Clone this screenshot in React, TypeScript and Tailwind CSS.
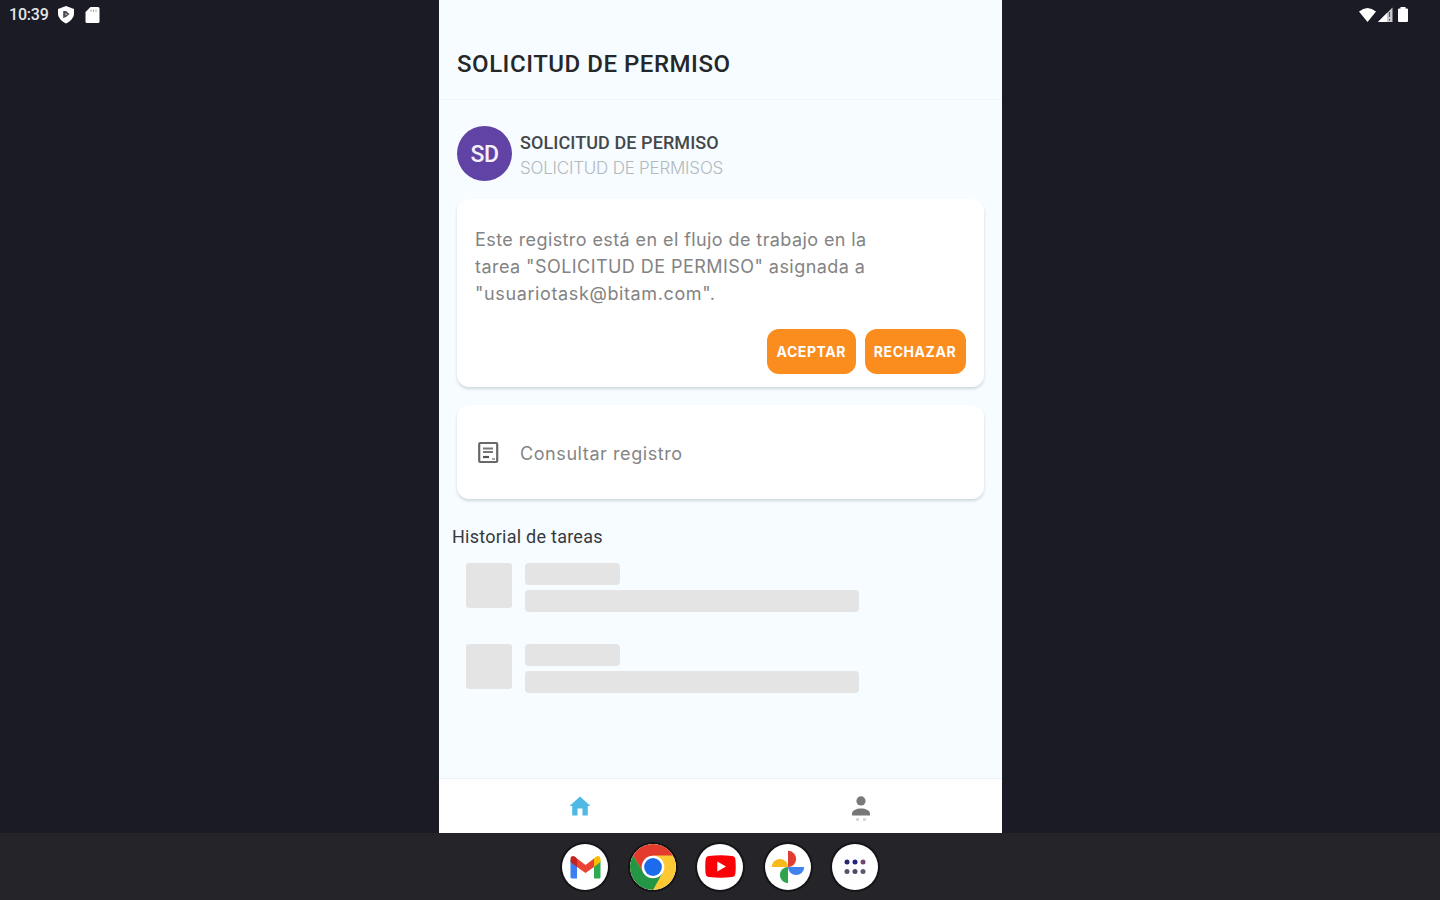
import React from "react";

function ShieldIcon() {
  return (
    <svg className="ml-[7px] h-[20px] w-[18px]" viewBox="0 0 18 20">
      <path d="M9 1 L17 4 V8.500 C17 13 13 16.500 9 18.500 C5 16.500 1 13 1 8.500 V4 Z" fill="#fff" />
      <path d="M6.200 6 H9 L12.500 9 L9 12 L6.200 13 Z" fill="#4a4a52" />
      <path d="M8.500 8 V10.500 L10.500 9.200 Z" fill="#c8c8cc" />
    </svg>
  );
}

function SdCardIcon() {
  return (
    <svg className="ml-[10px] h-[18px] w-[15px]" viewBox="0 0 15 18">
      <path d="M5.500 1 H13 Q14.500 1 14.500 2.500 V15.500 Q14.500 17 13 17 H2 Q.5 17 .5 15.500 V6 Z" fill="#fff" />
      <path d="M6 3.500 V6 M8.500 3.500 V6 M11 3.500 V6" stroke="#aaaaae" strokeWidth="1" />
    </svg>
  );
}

function StatusIcons() {
  return (
    <svg className="h-[20px] w-[54px]" viewBox="0 0 54 20">
      <path d="M1 6.500 Q9.500 -.5 18 6.500 L9.500 17 Z" fill="#fff" />
      <path d="M34.500 2.500 V17 H20 Z" fill="#c9c9cd" />
      <path d="M29 8 L20 17 H29 Z" fill="#fff" />
      <path d="M31.500 7 V12 M31.500 14 V15.500" stroke="#55555d" strokeWidth="1.200" />
      <path d="M42.500 2 H47.500 V3.500 H49 Q50 3.500 50 4.500 V16 Q50 17 49 17 H41 Q40 17 40 16 V4.500 Q40 3.500 41 3.500 H42.500 Z" fill="#fff" />
    </svg>
  );
}

function RecordIcon() {
  return (
    <svg className="mt-[2px] h-[24px] w-[22px] shrink-0" viewBox="0 0 22 24">
      <rect x="2.200" y="2" width="18" height="19" rx="1" fill="none" stroke="#68686a" strokeWidth="2.200" />
      <path d="M6 7.500 H16 M6 11 H16" stroke="#777" strokeWidth="2" />
      <path d="M6 16 H12" stroke="#555" strokeWidth="2.200" />
      <path d="M15 18 H18" stroke="#888" strokeWidth="1.500" />
    </svg>
  );
}

function HomeIcon() {
  return (
    <svg className="h-[20px] w-[22px]" viewBox="0 0 22 20">
      <path d="M11 .5 L21.500 10 H18.800 V19.500 H13.500 V12.500 H8.500 V19.500 H3.200 V10 H.5 Z" fill="#4fb9e6" />
    </svg>
  );
}

function PersonIcon() {
  return (
    <svg className="h-[26px] w-[20px]" viewBox="0 0 20 26">
      <circle cx="10" cy="4.900" r="4.600" fill="#7a7a7a" />
      <path d="M1 19.500 V17.500 C1 14.500 5.500 12.500 10 12.500 C14.500 12.500 19 14.500 19 17.500 V19.500 Z" fill="#777" />
      <path d="M5 23.500 H8 M12 23.500 H15" stroke="#d2d2d2" strokeWidth="2.500" />
    </svg>
  );
}

function GmailIcon() {
  return (
    <svg className="h-[24px] w-[31px]" viewBox="0 0 31 24">
      <path d="M.5 5 L7 9 V23.500 H2 Q.5 23.500 .5 22 Z" fill="#3b7ff0" />
      <path d="M24 9 L30.500 5 V22 Q30.500 23.500 29 23.500 H24 Z" fill="#2da94f" />
      <path d="M24 3.500 L26 1.800 C28 .2 30.500 1.500 30.500 4 V7 L24 12 Z" fill="#fbbc04" />
      <path d="M7 3.500 L15.500 10 L24 3.500 V12 L15.500 18 L7 12 Z" fill="#ea4335" />
      <path d="M.5 4 C.5 1.500 3 .2 5 1.800 L7 3.500 V12 L.5 7 Z" fill="#c5221f" />
    </svg>
  );
}

function ChromeIcon() {
  return (
    <svg className="h-[46px] w-[46px]" viewBox="0 0 46 46">
      <circle cx="23" cy="23" r="23" fill="#fcc934" />
      <path d="M3.080 11.500 A23 23 0 0 1 42.920 11.500 H23 L13.260 28.620 Z" fill="#e33b2e" />
      <path d="M3.080 11.500 A23 23 0 0 0 23 46 L32.740 28.620 H13.260 Z" fill="#239746" />
      <circle cx="23" cy="23" r="11.300" fill="#fff" />
      <circle cx="23" cy="23" r="8.900" fill="#1a6cec" />
    </svg>
  );
}

function YouTubeIcon() {
  return (
    <svg className="h-[23px] w-[31px]" viewBox="0 0 31 23">
      <path d="M4 1 Q15.500 -.4 27 1 Q30 1.300 30.400 4.500 Q31.100 11.500 30.400 18.500 Q30 21.700 27 22 Q15.500 23.400 4 22 Q1 21.700 .6 18.500 Q-.1 11.500 .6 4.500 Q1 1.300 4 1 Z" fill="#fb0007" />
      <path d="M12.300 6.500 V16.500 L21 11.500 Z" fill="#fff" />
    </svg>
  );
}

function PhotosIcon() {
  return (
    <svg className="h-[34px] w-[34px]" viewBox="0 0 34 34">
      <path d="M17 .8 A8.100 8.100 0 0 1 17 17 Z" fill="#e33c30" />
      <path d="M33.200 17 A8.100 8.100 0 0 1 17 17 Z" fill="#4083ee" />
      <path d="M17 33.200 A8.100 8.100 0 0 1 17 17 Z" fill="#2ea44e" />
      <path d="M.8 17 A8.100 8.100 0 0 1 17 17 Z" fill="#f8b91b" />
    </svg>
  );
}

function AppsIcon() {
  return (
    <svg className="h-[16px] w-[22px]" viewBox="0 0 22 16">
      <circle cx="3" cy="3" r="2.500" fill="#28286f" />
      <circle cx="11" cy="3" r="2.500" fill="#22228a" />
      <circle cx="19" cy="3" r="2.500" fill="#76456f" />
      <circle cx="3" cy="12.500" r="2.500" fill="#54566c" />
      <circle cx="11" cy="12.500" r="2.500" fill="#4b4b68" />
      <circle cx="19" cy="12.500" r="2.500" fill="#5b5b70" />
    </svg>
  );
}

function DockApp({ children }: { children: React.ReactNode }) {
  return (
    <div className="flex size-[46px] items-center justify-center overflow-hidden rounded-full bg-white shadow-[0_0_0_2px_#141418]">
      {children}
    </div>
  );
}

function SkeletonRow() {
  return (
    <div className="flex h-[50px] gap-[13px]">
      <div className="h-[45px] w-[46px] rounded-[3px] bg-[#e4e4e4]" />
      <div className="flex flex-col gap-[5px]">
        <div className="h-[22px] w-[95px] rounded-[4px] bg-[#e4e4e4]" />
        <div className="h-[22px] w-[334px] rounded-[4px] bg-[#e4e4e4]" />
      </div>
    </div>
  );
}

const card = "rounded-[12px] bg-white shadow-[0_2px_3px_rgba(60,80,80,0.2)]";
const action =
  "flex h-[45px] items-center justify-center rounded-[12px] bg-[#fb8c1e] font-[Inter,sans-serif] text-[14px] font-bold tracking-[0.55px] text-white";

export default function App() {
  return (
    <div className="flex h-[900px] w-[1440px] flex-col overflow-hidden bg-[#1a1b25] font-[Roboto,sans-serif]">
      <div className="grid h-[833px] grid-cols-[439px_563px_438px]">
        <div className="flex h-[29px] items-center pl-[9px]">
          <span className="w-[41px] text-[16px] font-medium tracking-[-0.2px] whitespace-nowrap text-[#e6e6e8]">10:39</span>
          <ShieldIcon />
          <SdCardIcon />
        </div>

        <main className="flex h-[833px] flex-col bg-[#f6fcff]">
          <header className="flex h-[100px] items-center border-b border-[#f0f6f9] pt-[28px] pl-[18px]">
            <h1 className="text-[24px] font-medium tracking-[0.53px] whitespace-nowrap text-[#252729]">SOLICITUD DE PERMISO</h1>
          </header>

          <section className="flex h-[99px] items-start gap-[8px] pt-[26px] pl-[18px]">
            <div className="flex size-[55px] items-center justify-center rounded-full bg-[#6142a5] pt-[3px] text-[23px] font-medium tracking-[-0.5px] text-[#f4effa]">
              SD
            </div>
            <div className="pt-[4px] whitespace-nowrap">
              <p className="text-[18px] leading-[25px] font-medium tracking-[0.08px] text-[#45484a]">SOLICITUD DE PERMISO</p>
              <p className="font-[Inter,sans-serif] text-[17px] leading-[26px] font-light tracking-[-0.22px] text-[#b4b9bc]">
                SOLICITUD DE PERMISOS
              </p>
            </div>
          </section>

          <section className={`${card} mx-[18px] flex h-[188px] flex-col justify-between pt-[27px] pr-[18.5px] pb-[13px] pl-[18px]`}>
            <p className="font-[Inter,sans-serif] text-[18px] leading-[27px] whitespace-nowrap text-[#838383]">
              <span className="block tracking-[0.41px]">Este registro está en el flujo de trabajo en la</span>
              <span className="block tracking-[0.45px]">tarea "SOLICITUD DE PERMISO" asignada a</span>
              <span className="block tracking-[0.62px]">"usuariotask@bitam.com".</span>
            </p>
            <div className="flex justify-end gap-[9px]">
              <button className={`${action} w-[88.5px]`}>ACEPTAR</button>
              <button className={`${action} w-[101px]`}>RECHAZAR</button>
            </div>
          </section>

          <section className={`${card} mx-[18px] mt-[18px] flex h-[94px] items-center gap-[21px] pl-[20px]`}>
            <RecordIcon />
            <span className="pt-[2px] font-[Inter,sans-serif] text-[18px] tracking-[0.58px] whitespace-nowrap text-[#858585]">
              Consultar registro
            </span>
          </section>

          <h2 className="mt-[25px] pl-[13px] text-[18px] leading-[26px] tracking-[0.25px] whitespace-nowrap text-[#36393b]">
            Historial de tareas
          </h2>
          <div className="mt-[13px] flex flex-col gap-[31px] pl-[27px]">
            <SkeletonRow />
            <SkeletonRow />
          </div>

          <nav className="mt-auto grid h-[55px] grid-cols-2 border-t border-[#edf2f4] bg-white">
            <div className="flex justify-center pt-[17px]">
              <HomeIcon />
            </div>
            <div className="flex justify-center pt-[17px]">
              <PersonIcon />
            </div>
          </nav>
        </main>

        <div className="flex h-[29px] items-center justify-end pr-[28px]">
          <StatusIcons />
        </div>
      </div>

      <footer className="flex h-[67px] items-center justify-center gap-[21.5px] bg-[#252529]">
        <DockApp><GmailIcon /></DockApp>
        <DockApp><ChromeIcon /></DockApp>
        <DockApp><YouTubeIcon /></DockApp>
        <DockApp><PhotosIcon /></DockApp>
        <DockApp><AppsIcon /></DockApp>
      </footer>
    </div>
  );
}
